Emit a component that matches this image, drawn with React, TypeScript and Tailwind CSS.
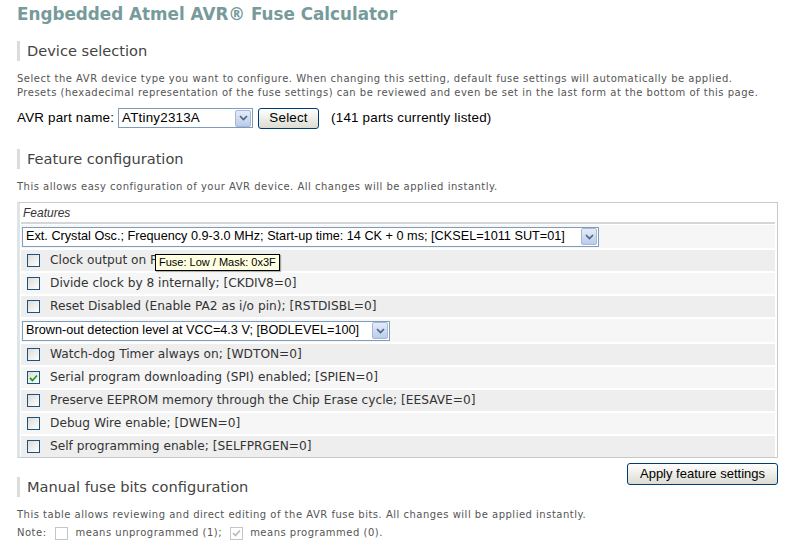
import React from 'react'

const verdana = { fontFamily: '"DejaVu Sans", Verdana, sans-serif' }
const tahoma = { fontFamily: '"Liberation Sans", Tahoma, Arial, sans-serif' }

const Heading = ({ children }: { children: React.ReactNode }) => (
  <h2 className="flex items-center h-[20px] border-l-[3px] border-[#dcdcdc] pl-[7px] text-[14.6px] leading-[20px] text-[#444]">
    {children}
  </h2>
)

const Dropdown = () => (
  <span className="inline-flex items-center justify-center w-[16px] h-[17px] border border-[#a7b8d6] bg-gradient-to-b from-[#e4ecf8] to-[#b9cdeb] rounded-[2px]">
    <svg width="9" height="6" viewBox="0 0 9 6">
      <path d="M1 1 L4.5 4.5 L8 1" fill="none" stroke="#4d6185" strokeWidth="1.6" />
    </svg>
  </span>
)

const Checkbox = ({ checked = false }: { checked?: boolean }) => (
  <span className="inline-flex items-center justify-center w-[13px] h-[13px] border border-[#1c5180] bg-gradient-to-br from-[#dcdcd6] to-[#ffffff]">
    {checked && (
      <svg width="9" height="8" viewBox="0 0 9 8">
        <path d="M1 4 L3.5 6.5 L8 1.5" fill="none" stroke="#21a121" strokeWidth="1.8" />
      </svg>
    )}
  </span>
)

const rows: { type: 'select' | 'check'; label: string; checked?: boolean; width?: number }[] = [
  { type: 'select', label: 'Ext. Crystal Osc.; Frequency 0.9-3.0 MHz; Start-up time: 14 CK + 0 ms; [CKSEL=1011 SUT=01]', width: 577 },
  { type: 'check', label: 'Clock output on PORTD2; [CKOUT=0]' },
  { type: 'check', label: 'Divide clock by 8 internally; [CKDIV8=0]' },
  { type: 'check', label: 'Reset Disabled (Enable PA2 as i/o pin); [RSTDISBL=0]' },
  { type: 'select', label: 'Brown-out detection level at VCC=4.3 V; [BODLEVEL=100]', width: 368 },
  { type: 'check', label: 'Watch-dog Timer always on; [WDTON=0]' },
  { type: 'check', label: 'Serial program downloading (SPI) enabled; [SPIEN=0]', checked: true },
  { type: 'check', label: 'Preserve EEPROM memory through the Chip Erase cycle; [EESAVE=0]' },
  { type: 'check', label: 'Debug Wire enable; [DWEN=0]' },
  { type: 'check', label: 'Self programming enable; [SELFPRGEN=0]' },
]

export default function App() {
  return (
    <div className="w-[793px] h-[547px] overflow-hidden bg-white pl-[17px] pr-[15px] pt-[4px]" style={verdana}>
      <h1 className="text-[16.8px] leading-[20px] font-bold text-[#779a9a]">Engbedded Atmel AVR® Fuse Calculator</h1>

      <div className="mt-[17px]">
        <Heading>Device selection</Heading>
      </div>
      <p className="mt-[11px] text-[10px] tracking-[0.5px] leading-[14px] text-[#555]">
        Select the AVR device type you want to configure. When changing this setting, default fuse settings will automatically be applied.
        <br />
        Presets (hexadecimal representation of the fuse settings) can be reviewed and even be set in the last form at the bottom of this page.
      </p>
      <div className="mt-[8px] flex items-center h-[20px] text-[13.4px] tracking-[0.2px] text-black" style={tahoma}>
        <span>AVR part name:</span>
        <span className="ml-[4px] flex items-center w-[135px] h-[20px] border border-[#7f9db9] bg-white pl-[3px] pr-[1px]">
          <span className="flex-1">ATtiny2313A</span>
          <Dropdown />
        </span>
        <span className="ml-[5px] flex items-center justify-center w-[61px] h-[21px] border border-[#003c74] rounded-[3px] bg-gradient-to-b from-[#ffffff] to-[#dcdcd3]">
          Select
        </span>
        <span className="ml-[12px]">(141 parts currently listed)</span>
      </div>

      <div className="mt-[21px]">
        <Heading>Feature configuration</Heading>
      </div>
      <p className="mt-[11px] text-[10px] tracking-[0.5px] leading-[14px] text-[#555]">
        This allows easy configuration of your AVR device. All changes will be applied instantly.
      </p>

      <div className="relative mt-[8px] w-[761px] border border-[#c9c9c9] border-l-[3px] border-l-[#dde5e9] pl-[1px] pr-[2px]">
        <div className="h-[21px] flex items-center border-b-2 border-[#d6d6d6] pl-[2px] text-[12px] italic text-[#333]" style={tahoma}>
          Features
        </div>
        <div className="flex flex-col gap-[2px] pt-[1px]">
          {rows.map((r, i) => (
            <div key={i} className={`${r.type === 'select' ? 'h-[23px]' : 'h-[21px]'} flex items-center ${i % 2 === 0 ? 'bg-[#f6f6f6]' : 'bg-[#eeeeee]'}`}>
              {r.type === 'select' ? (
                <span
                  className="ml-[1px] inline-flex items-center h-[20px] border border-[#7f9db9] bg-white pl-[3px] pr-[1px] text-[12.7px] text-black"
                  style={{ ...tahoma, width: r.width }}
                >
                  <span className="flex-1 whitespace-nowrap overflow-hidden">{r.label}</span>
                  <Dropdown />
                </span>
              ) : (
                <>
                  <span className="ml-[6px] flex"><Checkbox checked={r.checked} /></span>
                  <span className="ml-[10px] text-[12.2px] text-[#333] whitespace-nowrap">{r.label}</span>
                </>
              )}
            </div>
          ))}
        </div>
        <div
          className="absolute left-[135px] top-[51px] px-[3px] h-[17px] flex items-center border border-black bg-[#ffffe1] text-[11px] text-black shadow-[1px_1px_1px_rgba(0,0,0,0.3)]"
          style={tahoma}
        >
          Fuse: Low / Mask: 0x3F
        </div>
      </div>

      <div className="flex justify-end w-[761px] mt-[5px]">
        <span
          className="flex items-center justify-center w-[151px] h-[22px] border border-[#003c74] rounded-[3px] bg-gradient-to-b from-[#ffffff] to-[#dcdcd3] text-[13px] text-black"
          style={tahoma}
        >
          Apply feature settings
        </span>
      </div>

      <div className="-mt-[8px]">
        <Heading>Manual fuse bits configuration</Heading>
      </div>
      <p className="mt-[11px] text-[10px] tracking-[0.5px] leading-[14px] text-[#555]">
        This table allows reviewing and direct editing of the AVR fuse bits. All changes will be applied instantly.
      </p>
      <p className="mt-[4px] flex items-center text-[10px] tracking-[0.5px] leading-[14px] text-[#555]">
        <span>Note:</span>
        <span className="ml-[8px] w-[13px] h-[13px] border border-[#c5c5c5] bg-white"></span>
        <span className="ml-[8px]">means unprogrammed (1);</span>
        <span className="ml-[8px] w-[13px] h-[13px] border border-[#c5c5c5] bg-white flex items-center justify-center">
          <svg width="9" height="8" viewBox="0 0 9 8">
            <path d="M1 4 L3.5 6.5 L8 1.5" fill="none" stroke="#b8b8b8" strokeWidth="1.6" />
          </svg>
        </span>
        <span className="ml-[7px]">means programmed (0).</span>
      </p>
    </div>
  )
}
